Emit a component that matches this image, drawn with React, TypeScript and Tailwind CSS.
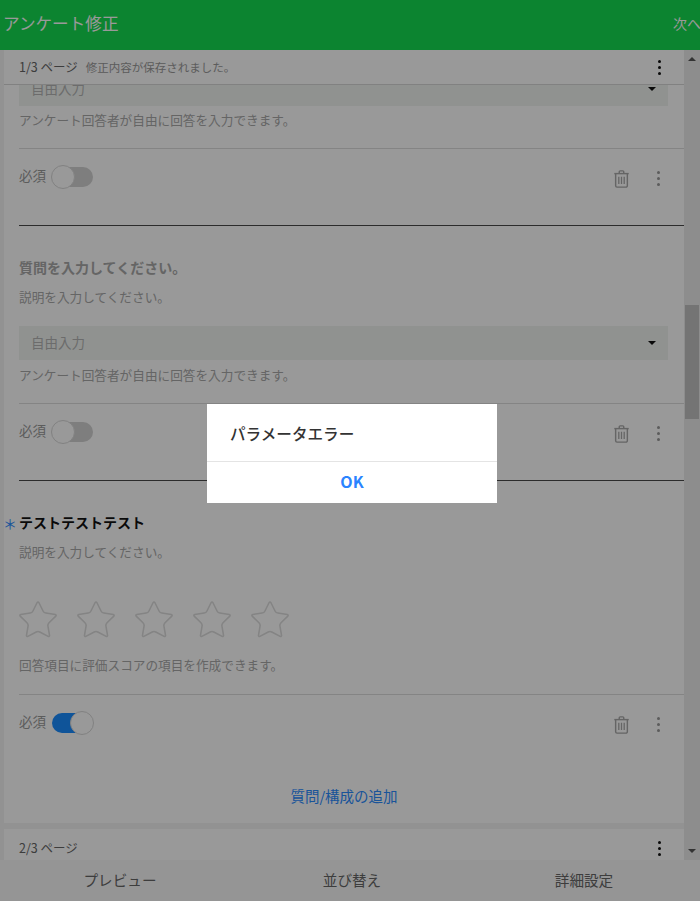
const font = "font-['Noto_Sans_CJK_JP','Noto_Sans',sans-serif]";

function Dots({ dark }: { dark?: boolean }) {
  return (
    <div className="flex flex-col gap-[3px] w-[3px]">
      {[0, 1, 2].map((i) => (
        <span key={i} className={`w-[3px] h-[3px] rounded-full ${dark ? "bg-[#111]" : "bg-[#999]"}`} />
      ))}
    </div>
  );
}

function Trash() {
  return (
    <svg width="17" height="18" viewBox="0 0 18 20" fill="none" stroke="#a8a8a8" strokeWidth="1.6">
      <path d="M1 4h16" />
      <path d="M6.5 4V2a1 1 0 0 1 1-1h3a1 1 0 0 1 1 1v2" />
      <path d="M2.5 4v13.5a1.5 1.5 0 0 0 1.5 1.5h10a1.5 1.5 0 0 0 1.5-1.5V4" />
      <path d="M6 7.5v8M9 7.5v8M12 7.5v8" strokeWidth="1.4" />
    </svg>
  );
}

function Toggle({ on }: { on?: boolean }) {
  return (
    <div className={`relative w-[41px] h-[20px] rounded-full ${on ? "bg-[#1a8cff]" : "bg-[#d2d2d2]"}`}>
      <span
        className={`absolute top-[-2px] w-[24px] h-[24px] rounded-full bg-white border border-[#d8d8d8] ${
          on ? "right-[-1px]" : "left-[-1px]"
        }`}
      />
    </div>
  );
}

function RequiredRow({ on }: { on?: boolean }) {
  return (
    <div className="h-[56px] border-t border-[#dcdcdc] flex items-center">
      <span className="text-[13.5px] text-[#999] mr-[6px] -mt-[3px]">必須</span>
      <Toggle on={on} />
      <div className="ml-auto flex items-center mt-[4px] mr-[24px]">
        <Trash />
        <div className="ml-[27px]">
          <Dots />
        </div>
      </div>
    </div>
  );
}

function SelectBox() {
  return (
    <div className="h-[34px] bg-[#f0f4f0] flex items-center px-[12px] text-[13.5px] text-[#b4b4b4]">
      <span className="-mt-[2px]">自由入力</span>
      <span className="ml-auto w-0 h-0 border-l-[4px] border-r-[4px] border-t-[4px] border-l-transparent border-r-transparent border-t-[#111]" />
    </div>
  );
}

function Hint({ children, className }: { children: string; className?: string }) {
  return <p className={`h-[18px] leading-[18px] text-[12.65px] text-[#a8a8a8] ${className ?? ""}`}>{children}</p>;
}

function Star() {
  return (
    <svg width="38" height="38" viewBox="1.5 1.7 21 20.5" fill="none" stroke="#dcdcdc" strokeWidth="0.85">
      <path d="M11.525 2.295a.53.53 0 0 1 .95 0l2.31 4.679a2.123 2.123 0 0 0 1.595 1.16l5.166.756a.53.53 0 0 1 .294.904l-3.736 3.638a2.123 2.123 0 0 0-.611 1.878l.882 5.14a.53.53 0 0 1-.771.56l-4.618-2.428a2.122 2.122 0 0 0-1.973 0L6.396 21.01a.53.53 0 0 1-.77-.56l.881-5.139a2.122 2.122 0 0 0-.611-1.879L2.16 9.795a.53.53 0 0 1 .294-.906l5.165-.755a2.122 2.122 0 0 0 1.597-1.16z" />
    </svg>
  );
}

function QuestionHead({ title, active }: { title: string; active?: boolean }) {
  return (
    <>
      <div className="relative mt-[31px]">
        {active && <span className="absolute left-[-16px] top-[1px] text-[14px] leading-[20px] text-[#2b8cff]">＊</span>}
        <h3 className={`h-[20px] leading-[20px] text-[14px] font-bold ${active ? "text-[#111]" : "text-[#a8a8a8]"}`}>{title}</h3>
      </div>
      <Hint className="mt-[11px]">説明を入力してください。</Hint>
    </>
  );
}

export default function App() {
  return (
    <div className={`relative w-[700px] h-[901px] overflow-hidden flex flex-col bg-[#f4f4f4] ${font}`}>
      {/* header */}
      <header className="h-[50px] shrink-0 bg-[#15dc50] flex items-center justify-between pl-[3px] text-white">
        <span className="text-[16.6px] -mt-[3px]">アンケート修正</span>
        <span className="text-[14px] w-[27px] overflow-hidden whitespace-nowrap -mt-[3px]">次へ</span>
      </header>

      <div className="flex-1 flex min-h-0">
        <main className="flex-1 min-w-0 pl-[4px] flex flex-col">
          <div className="h-[35px] shrink-0 bg-white border-b border-[#d8d8d8] flex items-center pl-[15px] pr-[23px]">
            <span className="text-[12.5px] text-[#666] mt-[1px]">1/3 ページ</span>
            <span className="ml-[8px] text-[11.5px] text-[#999] mt-[1px]">修正内容が保存されました。</span>
            <div className="ml-auto">
              <Dots dark />
            </div>
          </div>

          <div className="flex-1 min-h-0 overflow-hidden">
            <div className="-mt-[13px] flex flex-col bg-white pl-[15px]">
              <div className="flex flex-col pr-[16px]">
                <SelectBox />
                <Hint className="mt-[5px]">アンケート回答者が自由に回答を入力できます。</Hint>
              </div>
              <div className="mt-[19px]">
                <RequiredRow />
              </div>
              <div className="pb-[21px] border-b border-[#4a4a4a]" />
            </div>

            <div className="flex flex-col bg-white pl-[15px]">
              <QuestionHead title="質問を入力してください。" />
              <div className="flex flex-col pr-[16px] mt-[20px]">
                <SelectBox />
                <Hint className="mt-[6px]">アンケート回答者が自由に回答を入力できます。</Hint>
              </div>
              <div className="mt-[19px]">
                <RequiredRow />
              </div>
              <div className="pb-[21px] border-b border-[#4a4a4a]" />
            </div>

            <div className="flex flex-col bg-white">
              <div className="flex flex-col pl-[15px]">
                <QuestionHead title="テストテストテスト" active />
                <div className="mt-[40px] flex gap-[20px]">
                  {[0, 1, 2, 3, 4].map((i) => (
                    <Star key={i} />
                  ))}
                </div>
                <Hint className="mt-[17px]">回答項目に評価スコアの項目を作成できます。</Hint>
                <div className="mt-[20px]">
                  <RequiredRow on />
                </div>
              </div>
              <div className="mt-[36px] pb-[17px] text-center text-[14.5px] leading-[20px] text-[#2b8cff]">質問/構成の追加</div>
            </div>

            <div className="mt-[6px] h-[38px] bg-white flex items-center pl-[15px] pr-[23px]">
              <span className="text-[12.5px] text-[#666]">2/3 ページ</span>
              <div className="ml-auto">
                <Dots dark />
              </div>
            </div>
          </div>
        </main>

        {/* scrollbar */}
        <div className="w-[16px] shrink-0 bg-[#ebebeb] flex flex-col items-center pt-[7px] pb-[7px]">
          <span className="w-0 h-0 border-l-[4px] border-r-[4px] border-b-[4px] border-l-transparent border-r-transparent border-b-[#555]" />
          <div className="mt-[244px] w-[14px] h-[114px] bg-[#c2c2c2]" />
          <span className="mt-auto w-0 h-0 border-l-[4px] border-r-[4px] border-t-[4px] border-l-transparent border-r-transparent border-t-[#555]" />
        </div>
      </div>

      {/* bottom tabs */}
      <nav className="h-[41px] shrink-0 bg-[#f8f8f8] pl-[4px] grid grid-cols-3 items-center text-center text-[14.6px] text-[#666]">
        <span className="-mt-[1px]">プレビュー</span>
        <span className="-mt-[1px]">並び替え</span>
        <span className="-mt-[1px]">詳細設定</span>
      </nav>

      {/* modal */}
      <div className="absolute inset-0 bg-black/40 flex items-center justify-center pl-[4px] pt-[6px]">
        <div className="w-[290px] h-[99px] bg-white flex flex-col">
          <div className="h-[58px] border-b border-[#e4e4e4] flex items-center pl-[23px] pt-[2px] text-[15.6px] font-medium text-[#333]">
            パラメータエラー
          </div>
          <div className="flex-1 flex items-center justify-center text-[16px] font-bold text-[#2a84ff] -mt-[4px]">OK</div>
        </div>
      </div>
    </div>
  );
}
